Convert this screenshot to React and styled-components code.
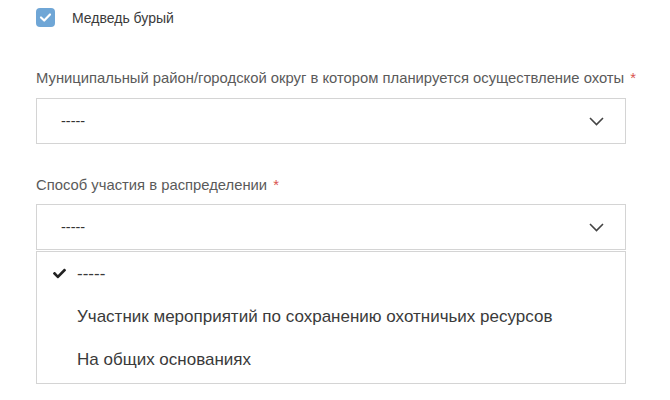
import React from 'react';
import styled, { createGlobalStyle } from 'styled-components';
import { FaCheck } from 'react-icons/fa';

const GlobalStyle = createGlobalStyle`
  body {
    margin: 0;
    background: #fff;
    font-family: "Liberation Sans", Arial, sans-serif;
  }
`;

const Page = styled.div`
  width: 590px;
  padding: 8px 0 0 36px;
`;

const CheckRow = styled.label`
  display: flex;
  align-items: center;
  gap: 17px;
  font-size: 14px;
  color: #3a3a3a;
  height: 19px;
`;

const Box = styled.span`
  width: 19px;
  height: 19px;
  border-radius: 4px;
  background: #6fa6d6;
  display: flex;
  align-items: center;
  justify-content: center;
`;

const Field = styled.div`
  margin-top: ${(p) => p.$top}px;
`;

const Label = styled.div`
  font-size: 14.8px;
  line-height: 20px;
  color: #5a5a5a;
  white-space: nowrap;
  margin-bottom: ${(p) => p.$gap}px;
`;

const Star = styled.span`
  color: #d9534f;
  margin-left: 6px;
`;

const Select = styled.div`
  height: 44px;
  border: 1px solid #d4d4d4;
  display: flex;
  align-items: center;
  justify-content: space-between;
  padding: 0 21px 0 24px;
  font-size: 14.5px;
  color: #333;
`;

const Dropdown = styled.ul`
  list-style: none;
  margin: 1px 0 0;
  padding: 0 0 2px;
  border: 1px solid #d4d4d4;
`;

const Option = styled.li`
  height: 43px;
  display: flex;
  align-items: center;
  position: relative;
  padding-left: 40px;
  font-size: 17px;
  color: #3a3a3a;

  svg {
    position: absolute;
    left: 16px;
  }
`;

const Chevron = () => (
  <svg width="15" height="9" viewBox="0 0 15 9">
    <polyline points="1,1 7.5,7.5 14,1" fill="none" stroke="#444" strokeWidth="1.6" />
  </svg>
);

const Tick = () => (
  <svg width="13" height="11" viewBox="0 0 13 11">
    <polyline points="2,5.5 5.2,8.5 11,2.5" fill="none" stroke="#fff" strokeWidth="2.2" strokeLinecap="round" strokeLinejoin="round" />
  </svg>
);

const options = ['-----', 'Участник мероприятий по сохранению охотничьих ресурсов', 'На общих основаниях'];

export default function App() {
  return (
    <>
      <GlobalStyle />
      <Page>
        <CheckRow>
          <Box>
            <Tick />
          </Box>
          Медведь бурый
        </CheckRow>
        <Field $top={41}>
          <Label $gap={10}>
            Муниципальный район/городской округ в котором планируется осуществление охоты<Star>*</Star>
          </Label>
          <Select>
            -----
            <Chevron />
          </Select>
        </Field>
        <Field $top={31}>
          <Label $gap={9}>
            Способ участия в распределении<Star>*</Star>
          </Label>
          <Select>
            -----
            <Chevron />
          </Select>
          <Dropdown>
            {options.map((o, i) => (
              <Option key={o}>
                {i === 0 && <FaCheck size={13} color="#222" />}
                {o}
              </Option>
            ))}
          </Dropdown>
        </Field>
      </Page>
    </>
  );
}
